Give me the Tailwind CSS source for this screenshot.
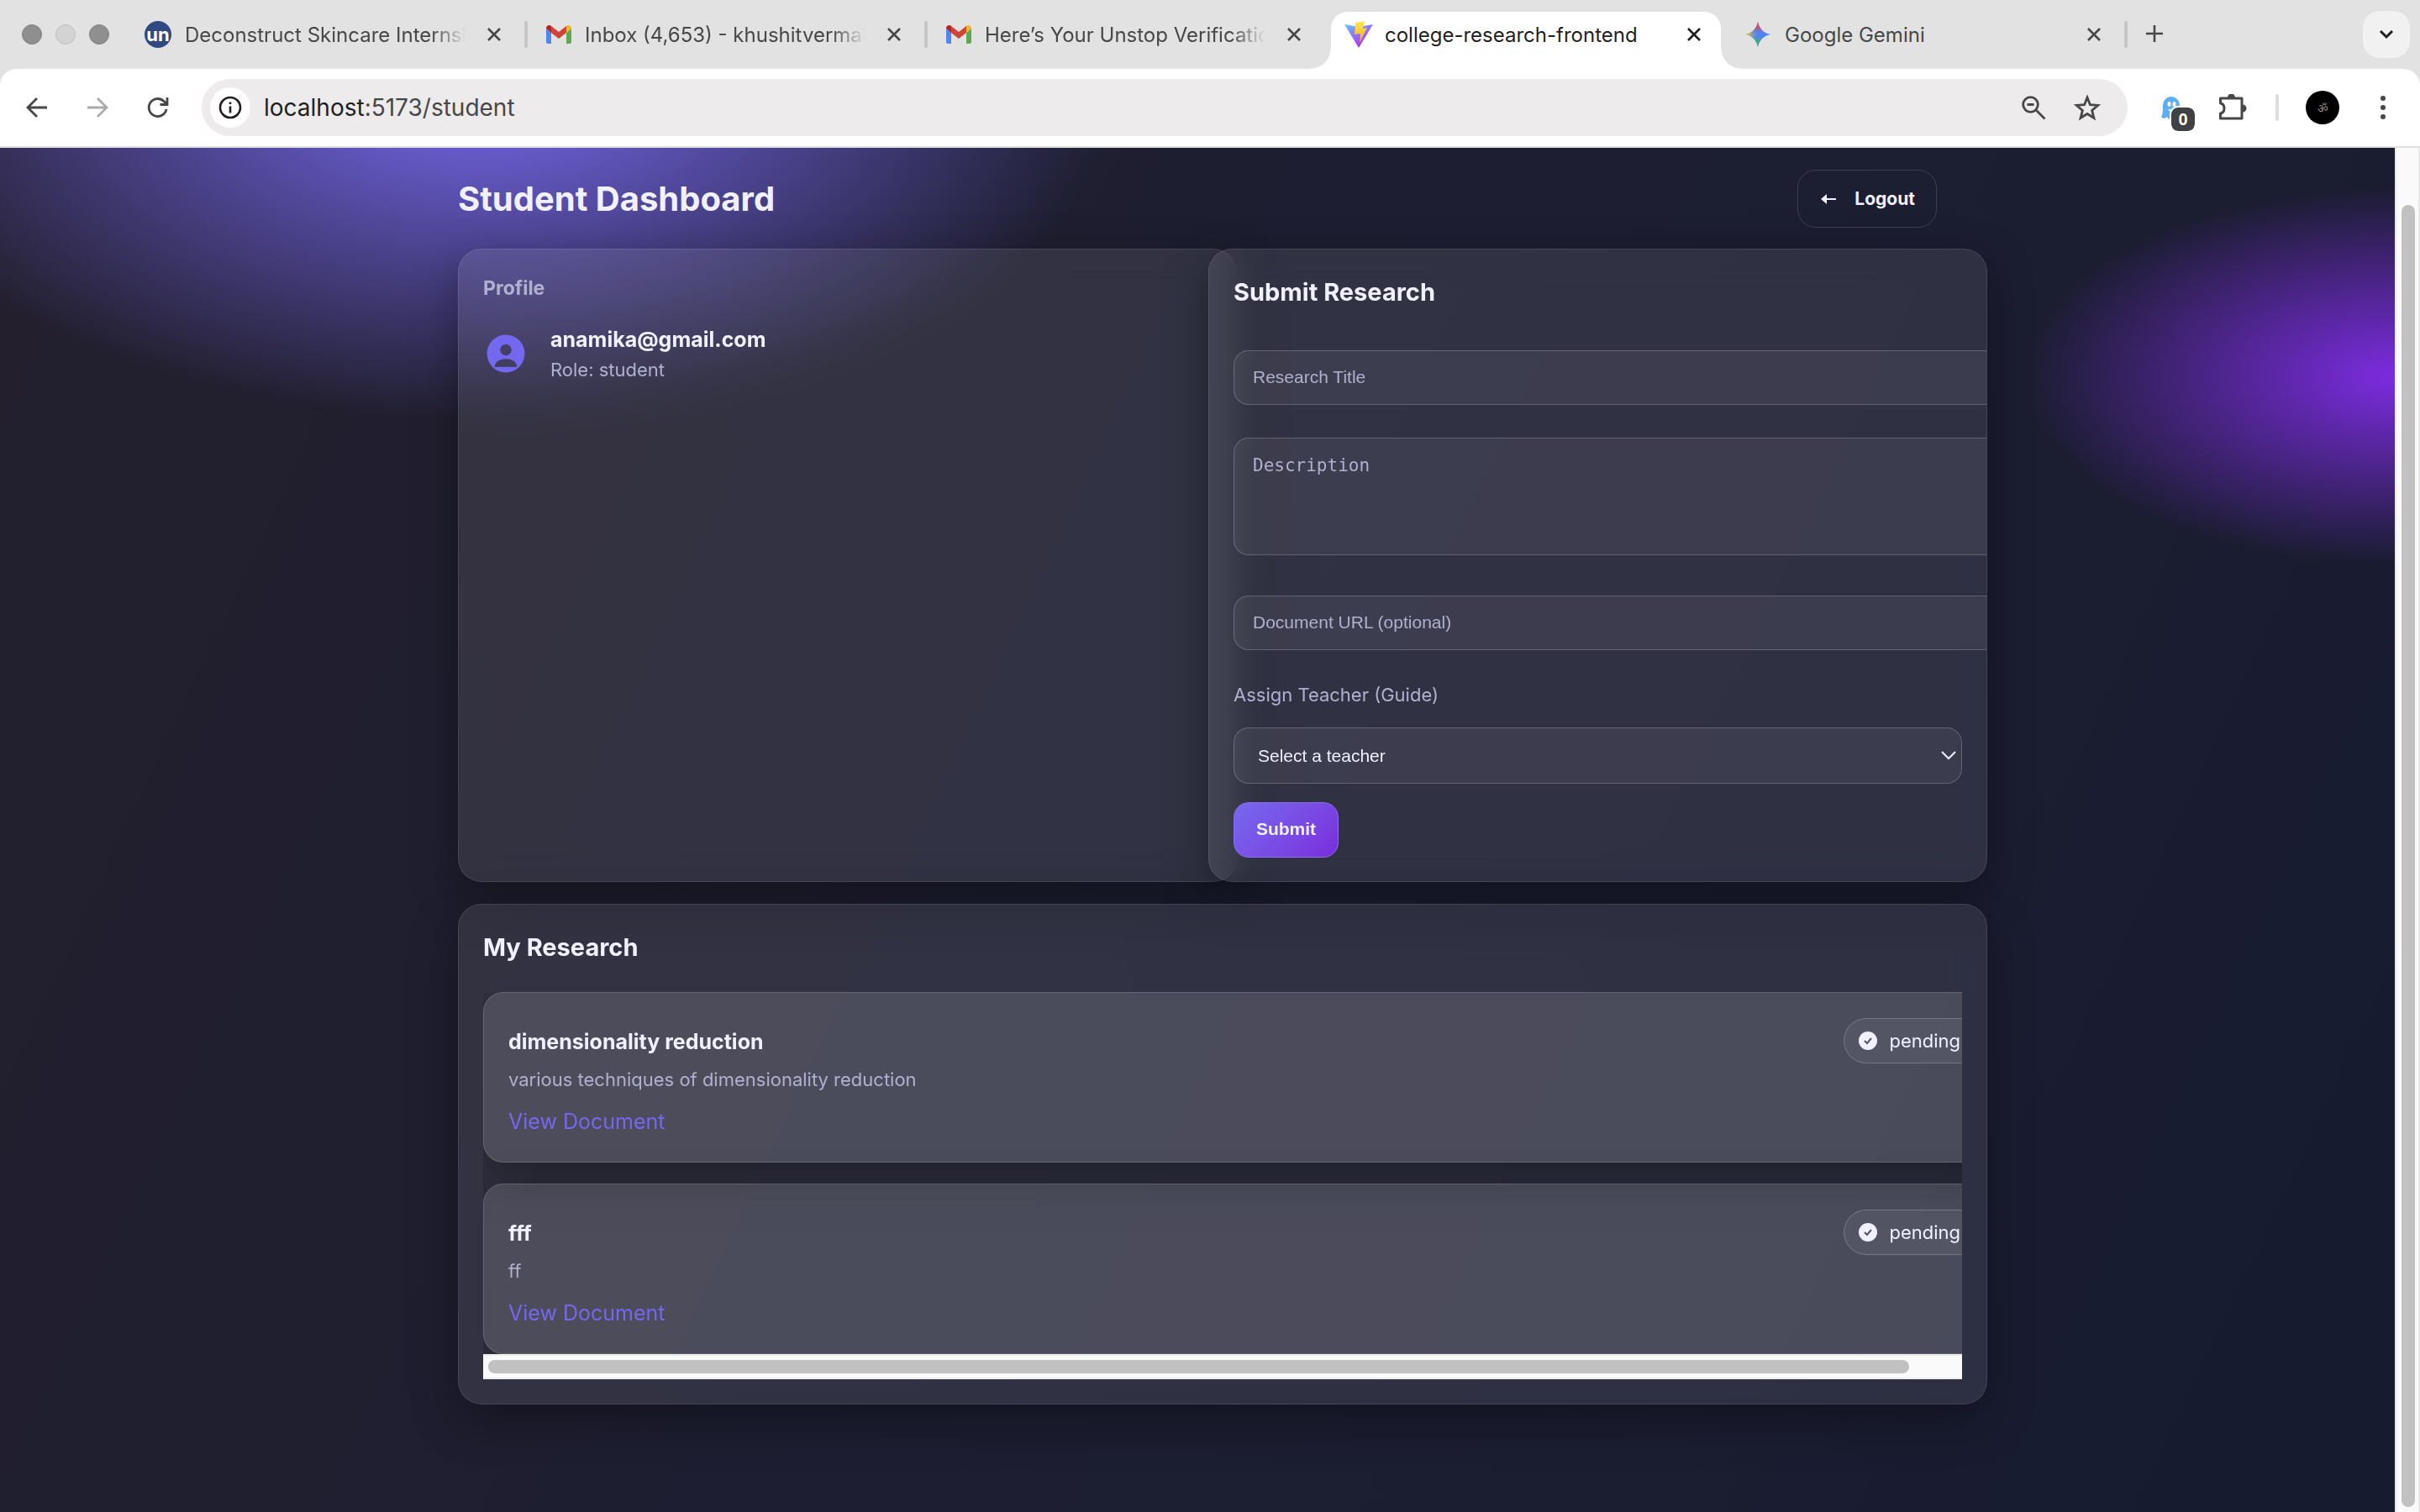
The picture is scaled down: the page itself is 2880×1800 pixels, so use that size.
<!DOCTYPE html>
<html lang="en">
<head>
    <meta charset="UTF-8">
    <meta name="viewport" content="width=device-width, initial-scale=1.0">
    <title>college-research-frontend</title>
    <script src="https://cdn.jsdelivr.net/npm/@tailwindcss/browser@4"></script>
</head>
<body class="flex min-h-screen flex-col bg-[#e2e2e2] font-[Inter,'Liberation_Sans',sans-serif] text-[#f0f0ff]">
    <!-- Tab strip -->
    <header class="flex h-[82px] shrink-0 items-center bg-[#e2e2e2] pl-[26px] pr-3 text-[24px] text-[#474747]">
        <div class="flex w-[146px] shrink-0 gap-4">
            <span class="size-6 rounded-full border border-[#808080] bg-[#8f8f8f]"></span>
            <span class="size-6 rounded-full border border-[#bebebe] bg-[#d3d3d3]"></span>
            <span class="size-6 rounded-full border border-[#808080] bg-[#8f8f8f]"></span>
        </div>
        <div class="flex w-[452px] shrink-0 items-center">
            <span class="flex size-8 items-center justify-center rounded-full bg-[#2f4a80] text-[22px] font-bold leading-none text-white">un</span>
            <span class="ml-4 w-[334px] overflow-hidden whitespace-nowrap pt-[2px] mask-r-from-88% mask-r-to-100%">Deconstruct Skincare Internship</span>
            <button aria-label="Close tab" class="ml-6"><svg class="size-5" viewBox="0 0 20 20" fill="none" stroke="#474747" stroke-width="2.6"><path d="M3 3l14 14M17 3L3 17"/></svg></button>
        </div>
        <span class="h-8 w-1 shrink-0 rounded-full bg-[#c6c6c6]"></span>
        <div class="flex w-[472px] shrink-0 items-center pl-[22px]">
            <svg class="h-6 w-[30px]" viewBox="0 0 30 24"><path fill="#4f86f0" d="M0 5l6 5v13H2a2 2 0 0 1-2-2z"/><path fill="#5fa852" d="M30 5l-6 5v13h4a2 2 0 0 0 2-2z"/><path fill="#d14438" d="M6 2l9 7 9-7v8l-9 7-9-7z"/><path fill="#b3261e" d="M0 4a3.600 3.600 0 0 1 6-2v8L0 5z"/><path fill="#efb52b" d="M30 4a3.600 3.600 0 0 0-6-2v8l6-5z"/></svg>
            <span class="ml-4 w-[334px] overflow-hidden whitespace-nowrap pt-[2px] mask-r-from-88% mask-r-to-100%">Inbox (4,653) - khushitverma8@gmail.com</span>
            <button aria-label="Close tab" class="ml-6"><svg class="size-5" viewBox="0 0 20 20" fill="none" stroke="#474747" stroke-width="2.6"><path d="M3 3l14 14M17 3L3 17"/></svg></button>
        </div>
        <span class="h-8 w-1 shrink-0 rounded-full bg-[#c6c6c6]"></span>
        <div class="flex w-[480px] shrink-0 items-center pl-[22px]">
            <svg class="h-6 w-[30px]" viewBox="0 0 30 24"><path fill="#4f86f0" d="M0 5l6 5v13H2a2 2 0 0 1-2-2z"/><path fill="#5fa852" d="M30 5l-6 5v13h4a2 2 0 0 0 2-2z"/><path fill="#d14438" d="M6 2l9 7 9-7v8l-9 7-9-7z"/><path fill="#b3261e" d="M0 4a3.600 3.600 0 0 1 6-2v8L0 5z"/><path fill="#efb52b" d="M30 4a3.600 3.600 0 0 0-6-2v8l6-5z"/></svg>
            <span class="ml-4 w-[334px] overflow-hidden whitespace-nowrap pt-[2px] mask-r-from-88% mask-r-to-100%">Here’s Your Unstop Verification Code</span>
            <button aria-label="Close tab" class="ml-6"><svg class="size-5" viewBox="0 0 20 20" fill="none" stroke="#474747" stroke-width="2.6"><path d="M3 3l14 14M17 3L3 17"/></svg></button>
        </div>
        <!-- Active tab -->
        <div class="relative mt-[14px] flex h-[68px] w-[464px] shrink-0 items-center rounded-t-[20px] bg-white pb-[14px] pl-4 text-[#1f1f1f]">
            <span class="absolute -left-6 bottom-0 size-6 bg-[radial-gradient(circle_at_0_0,transparent_23px,white_24px)]"></span>
            <span class="absolute -right-6 bottom-0 size-6 bg-[radial-gradient(circle_at_100%_0,transparent_23px,white_24px)]"></span>
            <svg class="h-8 w-[34px]" viewBox="0 0 34 32">
                <defs>
                    <linearGradient id="vite-a" x1="0" y1="0" x2=".6" y2="1"><stop stop-color="#5cc8ff"/><stop offset=".45" stop-color="#8b7bff"/><stop offset="1" stop-color="#b52cf0"/></linearGradient>
                    <linearGradient id="vite-b" x1="0" y1="0" x2="0" y2="1"><stop stop-color="#ffe94e"/><stop offset="1" stop-color="#f5a623"/></linearGradient>
                </defs>
                <path fill="url(#vite-a)" d="M0 4l17 3 17-3-17 28z"/><path fill="url(#vite-b)" d="M13 2l11-2-2 9 5-1-9 18 1-11-7 1z"/>
            </svg>
            <span class="ml-[14px] w-[334px] whitespace-nowrap pt-[2px]">college-research-frontend</span>
            <button aria-label="Close tab" class="ml-6"><svg class="size-5" viewBox="0 0 20 20" fill="none" stroke="#1f1f1f" stroke-width="2.6"><path d="M3 3l14 14M17 3L3 17"/></svg></button>
        </div>
        <div class="flex w-[480px] shrink-0 items-center pl-7">
            <svg class="size-8" viewBox="0 0 32 32">
                <defs>
                    <linearGradient id="gem-a" x1="0" y1=".5" x2="1" y2=".5"><stop stop-color="#f5c518"/><stop offset=".45" stop-color="#4f86f5"/><stop offset="1" stop-color="#4f7df9"/></linearGradient>
                    <linearGradient id="gem-b" x1=".5" y1="0" x2=".5" y2="1"><stop stop-color="#e5434a"/><stop offset=".22" stop-color="#e5434a" stop-opacity=".8"/><stop offset=".5" stop-color="#4f86f5" stop-opacity="0"/><stop offset=".75" stop-color="#3fb35f" stop-opacity=".7"/><stop offset="1" stop-color="#3fb35f"/></linearGradient>
                </defs>
                <path fill="url(#gem-a)" d="M16 1c1.500 8 7 13.500 15 15-8 1.500-13.500 7-15 15-1.500-8-7-13.500-15-15 8-1.500 13.500-7 15-15z"/>
                <path fill="url(#gem-b)" d="M16 1c1.500 8 7 13.500 15 15-8 1.500-13.500 7-15 15-1.500-8-7-13.500-15-15 8-1.500 13.500-7 15-15z"/>
            </svg>
            <span class="ml-4 w-[334px] whitespace-nowrap pt-[2px]">Google Gemini</span>
            <button aria-label="Close tab" class="ml-6"><svg class="size-5" viewBox="0 0 20 20" fill="none" stroke="#474747" stroke-width="2.6"><path d="M3 3l14 14M17 3L3 17"/></svg></button>
        </div>
        <span class="h-8 w-1 shrink-0 rounded-full bg-[#c6c6c6]"></span>
        <button aria-label="New tab" class="ml-5"><svg class="size-6" viewBox="0 0 24 24" fill="none" stroke="#474747" stroke-width="2.600"><path d="M12 1v20M2 11h20"/></svg></button>
        <button aria-label="Search tabs" class="ml-auto flex size-14 items-center justify-center rounded-[20px] bg-[#f1f1f1]"><svg class="size-5" viewBox="0 0 20 20" fill="none" stroke="#1f1f1f" stroke-width="3"><path d="M3 6l7 7 7-7"/></svg></button>
    </header>

    <!-- Toolbar -->
    <nav class="flex h-[94px] shrink-0 items-center rounded-t-[20px] border-b-2 border-[#dfe1e0] bg-white pl-[30px] pr-7">
        <button aria-label="Back"><svg class="size-7" viewBox="0 0 28 28" fill="none" stroke="#474747" stroke-width="2.800"><path d="M26 14H4M14 3L3 14l11 11"/></svg></button>
        <button aria-label="Forward" class="ml-11"><svg class="size-7" viewBox="0 0 28 28" fill="none" stroke="#ababab" stroke-width="2.800"><path d="M2 14h22M14 3l11 11-11 11"/></svg></button>
        <button aria-label="Reload" class="ml-11"><svg class="size-7" viewBox="0 0 28 28" fill="none" stroke="#474747" stroke-width="2.800"><path d="M24 16a10.500 10.500 0 1 1-3-9.500l4 4M25 2v8.500h-8.500"/></svg></button>
        <div class="ml-[38px] flex h-[68px] flex-1 items-center rounded-full bg-[#edebec] pl-[10px] pr-8">
            <span class="flex size-12 items-center justify-center rounded-full bg-white">
                <svg class="size-7" viewBox="0 0 28 28" fill="none" stroke="#1f1f1f" stroke-width="2.600"><circle cx="14" cy="14" r="12"/><path d="M14 12.500v8M14 7.500v2.600"/></svg>
            </span>
            <span class="ml-4 whitespace-nowrap text-[28px] text-[#474747]"><span class="text-[#1f1f1f]">localhost</span>:5173/student</span>
            <svg class="ml-auto size-8" viewBox="0 0 32 32" fill="none" stroke="#474747" stroke-width="2.800"><circle cx="12.500" cy="12.500" r="8.800"/><path d="M19 19l10.500 10.500M8.500 12.500h8"/></svg>
            <svg class="ml-8 size-8" viewBox="0 0 32 32" fill="none" stroke="#474747" stroke-width="2.800"><path d="M16 4l3.400 8.700 9.400.7-7.200 6 2.300 9.100-7.900-5-7.900 5 2.300-9.100-7.200-6 9.400-.7z"/></svg>
        </div>
        <!-- Ghost extension with its counter -->
        <div class="relative ml-9 size-8">
            <svg class="size-8" viewBox="0 0 32 32"><path fill="#5eaef2" d="M6 13a10 10 0 0 1 20 0v13l-6 4-3-3-4 3-2-3-3 2-4-1c2-4 2-9 2-15z"/><ellipse cx="13.500" cy="12" rx="2" ry="3" fill="#fff"/><ellipse cx="19.500" cy="12" rx="2" ry="3" fill="#fff"/><path d="M13 18c2 2.500 5 2.500 7 0" fill="none" stroke="#fff" stroke-width="2"/></svg>
            <span class="absolute -bottom-3 -right-3 flex size-7 items-center justify-center rounded-lg bg-[#3f4145] font-['Liberation_Sans',Arial,sans-serif] text-[20px] font-bold text-white outline-2 outline-white">0</span>
        </div>
        <svg class="ml-[38px] mr-[2px] h-8 w-9" viewBox="0 0 36 32" fill="none"><path stroke="#474747" stroke-width="3" stroke-linejoin="round" d="M4.500 5H30v24H4.500v-6c6-1 6-11 0-12z"/><path fill="#474747" d="M13 4a4.500 4.500 0 0 1 9 0zM31 12.500a4.500 4.500 0 0 1 0 9z"/></svg>
        <span class="ml-8 h-8 w-1 rounded-full bg-[#dedede]"></span>
        <span class="ml-8 flex size-10 items-center justify-center rounded-full bg-black text-[14px] text-[#8a8a8a]">ॐ</span>
        <button aria-label="Menu" class="ml-9"><svg class="size-8" viewBox="0 0 32 32" fill="#474747"><circle cx="16" cy="5" r="3"/><circle cx="16" cy="16" r="3"/><circle cx="16" cy="27" r="3"/></svg></button>
    </nav>

    <div class="flex flex-1">
        <!-- Page -->
        <main class="flex-1 overflow-hidden bg-[radial-gradient(760px_400px_at_570px_-76px,#7668ee,transparent),radial-gradient(440px_224px_at_100%_272px,#7c2ce0,transparent),linear-gradient(115deg,#231f2d,#1d1e31_45%,#1b1d31_75%,#161b2f)]">
            <div class="mx-auto w-[1760px] pt-[26px]">
                <div class="flex items-center justify-between">
                    <h1 class="text-[40px] font-bold leading-[44px]">Student Dashboard</h1>
                    <button class="flex h-[69px] items-center gap-5 rounded-[22px] border border-white/15 px-[25px] text-[21px] font-bold">
                        <svg class="h-5 w-[22px]" viewBox="0 0 22 20" fill="#f0f0ff"><path d="M2 10l7-6v5h11v2H9v5z"/></svg>
                        Logout
                    </button>
                </div>

                <!-- The cards are 60px wider than their grid columns and run over them -->
                <div class="mt-[25px] flex w-[1820px]">
                    <section class="h-[754px] w-[927px] rounded-[28px] border border-white/10 bg-white/9 p-[29px] shadow-[0_18px_54px_rgba(0,0,0,0.35)] backdrop-blur-[18px]">
                        <h2 class="mt-[2px] text-[23px] font-bold leading-[30px] text-[#b0b0d0]">Profile</h2>
                        <div class="mt-[26px] flex items-center gap-[26px]">
                            <svg class="size-[54px]" viewBox="0 0 24 24" fill="#7468ee"><path fill-rule="evenodd" d="M12 2a10 10 0 1 0 0 20 10 10 0 0 0 0-20zm0 5a3 3 0 1 1 0 6 3 3 0 0 1 0-6zM6 19c.5-3 3-4.200 6-4.200s5.500 1.200 6 4.200z"/></svg>
                            <div class="pt-[2px]">
                                <p class="text-[25px] font-bold leading-[36px]">anamika@gmail.com</p>
                                <p class="text-[22px] leading-[36px] text-[#b0b0d0]">Role: student</p>
                            </div>
                        </div>
                    </section>

                    <section class="-ml-[34px] h-[754px] w-[927px] overflow-hidden rounded-[28px] border border-white/10 bg-white/9 p-[29px] shadow-[0_18px_54px_rgba(0,0,0,0.35)] backdrop-blur-[18px]">
                        <h2 class="mt-1 text-[29px] font-bold leading-[36px]">Submit Research</h2>
                        <form class="mt-[51px] flex flex-col items-start">
                            <input type="text" aria-label="Research Title" placeholder="Research Title" class="h-[65px] w-[927px] shrink-0 rounded-[18px] border border-white/20 bg-white/6 px-[22px] pb-[2px] font-['Liberation_Sans',Arial,sans-serif] text-[21px] placeholder:text-[#b0b0d0]">
                            <textarea aria-label="Description" placeholder="Description" class="mt-[39px] h-[140px] w-[927px] shrink-0 resize-none rounded-[18px] border border-white/20 bg-white/6 px-[22px] py-[17px] font-['DejaVu_Sans_Mono',monospace] text-[21px] placeholder:text-[#b0b0d0]"></textarea>
                            <input type="url" aria-label="Document URL" placeholder="Document URL (optional)" class="mt-12 h-[65px] w-[927px] shrink-0 rounded-[18px] border border-white/20 bg-white/6 px-[22px] pb-[2px] font-['Liberation_Sans',Arial,sans-serif] text-[21px] placeholder:text-[#b0b0d0]">
                            <label for="teacher" class="mt-[35px] text-[22px] leading-[36px] text-[#b0b0d0]">Assign Teacher (Guide)</label>
                            <div class="relative mt-[21px] w-full">
                                <select id="teacher" class="h-[67px] w-full appearance-none rounded-[18px] border border-white/20 bg-white/6 px-[28px] font-['Liberation_Sans',Arial,sans-serif] text-[21px]">
                                    <option>Select a teacher</option>
                                </select>
                                <svg class="pointer-events-none absolute right-[6px] top-6 size-5" viewBox="0 0 20 20" fill="none" stroke="#f0f0ff" stroke-width="2"><path d="M2 5l8 8 8-8"/></svg>
                            </div>
                            <button type="button" class="mt-[22px] h-[66px] w-[125px] rounded-[18px] border border-[#8a6cf0] bg-linear-135 from-[#7668ee] to-[#7a2bdc] pb-[2px] font-['Liberation_Sans',Arial,sans-serif] text-[21px] font-bold">Submit</button>
                        </form>
                    </section>
                </div>

                <section class="mt-[26px] w-[1820px] rounded-[28px] border border-white/10 bg-white/9 p-[29px] shadow-[0_18px_54px_rgba(0,0,0,0.35)] backdrop-blur-[18px]">
                    <h2 class="mt-1 text-[29px] font-bold leading-[36px]">My Research</h2>
                    <div class="mt-[35px] overflow-hidden">
                        <div class="flex w-[1820px] flex-col gap-[25px]">
                            <article class="flex h-[203px] items-start justify-between rounded-[24px] border border-white/15 bg-white/13 p-[29px] pt-[30px] shadow-[0_18px_54px_rgba(0,0,0,0.35)]">
                                <div>
                                    <h3 class="mt-[10px] text-[25px] font-bold leading-[36px]">dimensionality reduction</h3>
                                    <p class="mt-[9px] text-[22px] leading-[36px] text-[#b0b0d0]">various techniques of dimensionality reduction</p>
                                    <a href="#" class="mt-[14px] block text-[25px] leading-[36px] text-[#7468ee]">View Document</a>
                                </div>
                                <span class="flex h-[54px] items-center gap-[14px] rounded-full border border-white/20 bg-white/6 pl-[17px] pr-[31px] text-[22px]">
                                    <svg class="size-[22px]" viewBox="0 0 22 22"><circle cx="11" cy="11" r="11" fill="#f0f0ff"/><path d="M7 11l3 3 5-6" fill="none" stroke="#55556a" stroke-width="2"/></svg>
                                    pending
                                </span>
                            </article>
                            <article class="flex h-[203px] items-start justify-between rounded-[24px] border border-white/15 bg-white/13 p-[29px] pt-[30px] shadow-[0_18px_54px_rgba(0,0,0,0.35)]">
                                <div>
                                    <h3 class="mt-[10px] text-[25px] font-bold leading-[36px]">fff</h3>
                                    <p class="mt-[9px] text-[22px] leading-[36px] text-[#b0b0d0]">ff</p>
                                    <a href="#" class="mt-[14px] block text-[25px] leading-[36px] text-[#7468ee]">View Document</a>
                                </div>
                                <span class="flex h-[54px] items-center gap-[14px] rounded-full border border-white/20 bg-white/6 pl-[17px] pr-[31px] text-[22px]">
                                    <svg class="size-[22px]" viewBox="0 0 22 22"><circle cx="11" cy="11" r="11" fill="#f0f0ff"/><path d="M7 11l3 3 5-6" fill="none" stroke="#55556a" stroke-width="2"/></svg>
                                    pending
                                </span>
                            </article>
                        </div>
                        <div class="relative flex h-[30px] items-center border-y-2 border-[#ebebeb] bg-[#fafafa] px-[6px]">
                            <div class="h-4 w-[1691px] rounded-full bg-[#c1c1c1]"></div>
                        </div>
                    </div>
                </section>
            </div>
        </main>
        <!-- Page scrollbar -->
        <div class="flex w-[30px] flex-col border-x-2 border-[#e8e8e8] bg-[#fafafa] pb-[6px] pl-[6px] pr-1 pt-[68px]">
            <div class="flex-1 rounded-full bg-[#c1c1c1]"></div>
        </div>
    </div>
</body>
</html>
